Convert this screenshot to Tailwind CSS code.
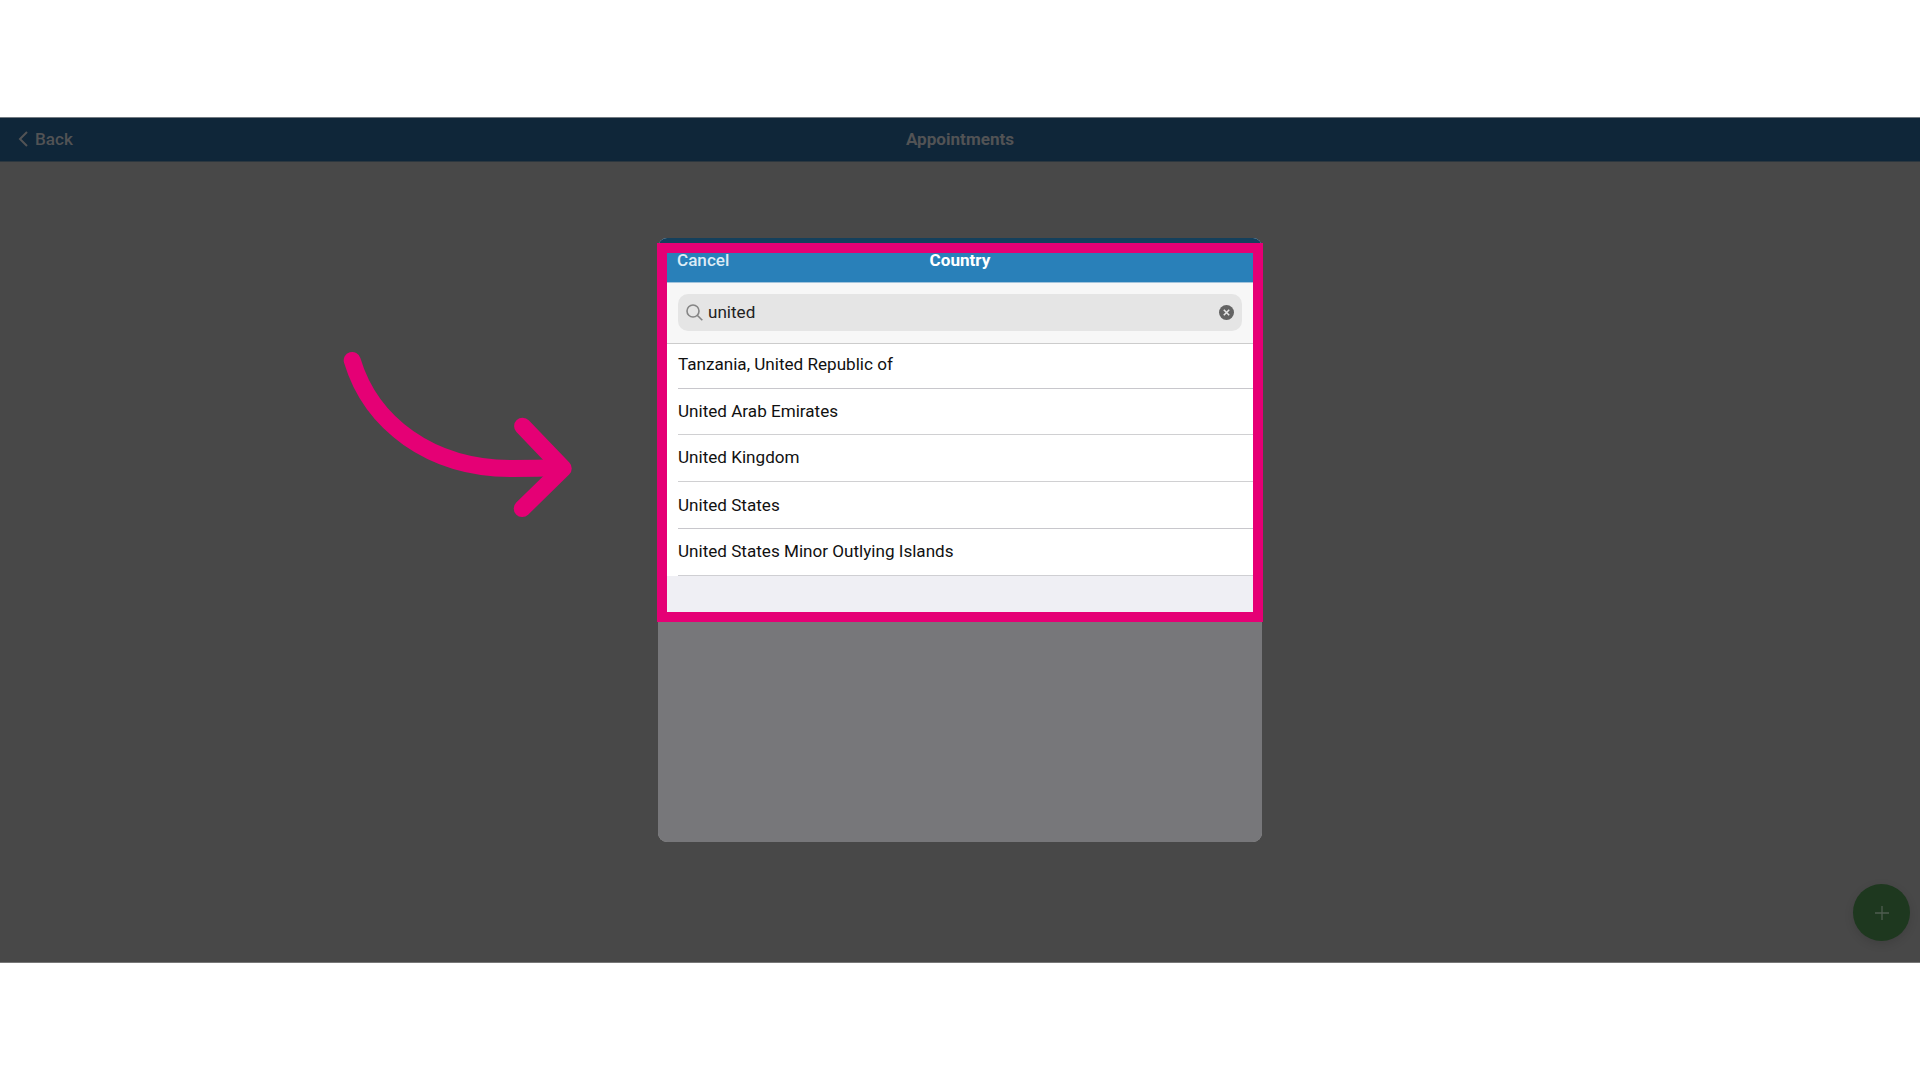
<!DOCTYPE html>
<html lang="en">
<head>
    <meta charset="UTF-8">
    <meta name="viewport" content="width=device-width, initial-scale=1.0">
    <title>Appointments - Country</title>
    <script src="https://cdn.jsdelivr.net/npm/@tailwindcss/browser@4"></script>
</head>
<body class="font-['Roboto',sans-serif] bg-white h-screen overflow-hidden py-[117px]">
    <div class="relative h-[846px] bg-[#484848] flex flex-col border-y border-[#737b82] border-b-[#777777]">
        <!-- Header -->
        <header class="h-11 shrink-0 bg-[#0f2639] border-b border-[#2c373f] grid grid-cols-3 items-center text-[17.1px] text-[#525355]">
            <a class="flex items-center pl-[18px] font-medium">
                <svg class="w-[10px] h-4 mr-[7px]" viewBox="0 0 10 16" fill="none" stroke="currentColor" stroke-width="2">
                    <path d="M9 1L2 8l7 7"/>
                </svg>
                Back
            </a>
            <h1 class="text-center font-bold">Appointments</h1>
        </header>

        <!-- Modal -->
        <main class="flex-1 flex justify-center pt-[76px]">
            <div class="relative w-[604px] h-[604px]">
                <div class="relative h-full rounded-[9px] overflow-hidden bg-[#efeff4]">
                    <div class="h-[45px] bg-[#2980b9] grid grid-cols-3 items-center px-[19px] pt-0.5 text-[17.1px] border-b border-[#a3c4dc]">
                        <span class="font-medium text-[#dcebf5]">Cancel</span>
                        <h2 class="text-center font-bold text-white">Country</h2>
                    </div>
                    <div class="h-[61px] bg-[#f7f7f7] border-b border-[#cccccc] px-5 pt-[11px]">
                        <div class="h-[37px] rounded-[10px] bg-[#e5e5e5] flex items-center px-2">
                            <svg class="w-[17px] h-[17px] mr-[5px]" viewBox="0 0 17 17" fill="none" stroke="#858585" stroke-width="1.6">
                                <circle cx="7" cy="7" r="6"/>
                                <path d="M11.2 11.2L16.3 16.3"/>
                            </svg>
                            <span class="flex-1 pt-px text-[17.1px] text-[#222222]">united</span>
                            <svg class="w-[15px] h-[15px]" viewBox="0 0 15 15">
                                <circle cx="7.5" cy="7.5" r="7.5" fill="#636363"/>
                                <path d="M4.8 4.8l5.4 5.4M10.2 4.8l-5.4 5.4" stroke="#e5e5e5" stroke-width="1.6"/>
                            </svg>
                        </div>
                    </div>
                    <ul class="bg-white text-[17.1px] text-[#111111]">
                        <li class="pl-5"><div class="h-[45px] pb-[3px] flex items-center border-b border-[#c8c7cc]">Tanzania, United Republic of</div></li>
                        <li class="pl-5"><div class="h-[46px] flex items-center border-b border-[#d0d0d2]">United Arab Emirates</div></li>
                        <li class="pl-5"><div class="h-[47px] pb-px flex items-center border-b border-[#d0d0d2]">United Kingdom</div></li>
                        <li class="pl-5"><div class="h-[47px] pt-px flex items-center border-b border-[#c8c7cc]">United States</div></li>
                        <li class="pl-5"><div class="h-[47px] flex items-center border-b border-[#cfcfd3]">United States Minor Outlying Islands</div></li>
                    </ul>
                    <!-- Dimmed areas outside the highlight -->
                    <div class="absolute inset-x-0 top-0 h-[5px] bg-black/50"></div>
                    <div class="absolute inset-x-0 bottom-0 h-[220px] bg-black/50"></div>
                </div>
                <!-- Highlight frame -->
                <div class="absolute -left-px top-[5px] w-[606px] h-[379px] border-10 border-[#e50075]"></div>
            </div>
        </main>

        <!-- Arrow -->
        <svg class="absolute left-[330px] top-[212px] w-[260px] h-[210px]" viewBox="330 330 260 210" fill="none" stroke="#e50075" stroke-width="17" stroke-linecap="round" stroke-linejoin="round">
            <path d="M352.2 360.4C371 423 430 468.5 512 468.5Q538 468.5 561 467.6"/>
            <path d="M522.6 426.2L563.2 468.5L522.2 508.6"/>
        </svg>

        <!-- Add button -->
        <button class="absolute right-[10px] bottom-[21px] w-[57px] h-[57px] rounded-full bg-[#1e381f] shadow-[0_3px_10px_rgba(0,0,0,0.12)] flex items-center justify-center">
            <svg class="w-[14px] h-[14px]" viewBox="0 0 14 14" stroke="#4f5c50" stroke-width="1.3">
                <path d="M7 0v14M0 7h14"/>
            </svg>
        </button>
    </div>
</body>
</html>
